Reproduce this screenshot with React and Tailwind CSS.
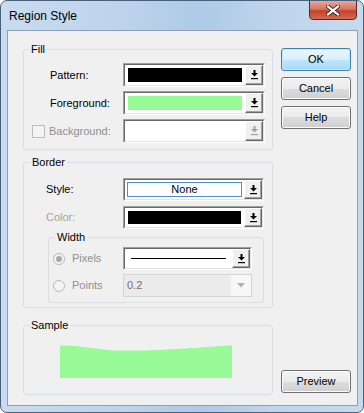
import React from "react";

const FONT = { fontFamily: '"Liberation Sans", Arial, sans-serif' };

function Arrow({ disabled }) {
  const c = disabled ? "#a3a3a3" : "#000";
  return (
    <svg width="9" height="10" viewBox="0 0 9 10">
      <rect x="3.5" y="0" width="2" height="3" fill={c} />
      <path d="M1 3h7L4.5 6.5z" fill={c} />
      <rect x="1" y="8" width="7" height="1.2" fill={c} />
    </svg>
  );
}

function Combo({ className, children, disabled }) {
  return (
    <div className={`flex border border-t-[#a0a0a0] border-l-[#a0a0a0] border-b-white border-r-white ${className}`}>
      <div className="flex flex-1 border border-t-[#696969] border-l-[#696969] border-b-[#e3e3e3] border-r-[#e3e3e3] bg-white">
        <div className="flex-1 flex items-stretch p-[3px]">{children}</div>
        <div className="w-[18px] flex items-center justify-center bg-[#f0f0f0] border border-t-white border-l-white border-b-[#696969] border-r-[#696969] shadow-[inset_-1px_-1px_0_#a0a0a0]">
          <Arrow disabled={disabled} />
        </div>
      </div>
    </div>
  );
}

function Group({ label, className, labelClass = "ml-[5px]", children }) {
  return (
    <div className={`border border-[#d5dfe5] rounded-[3px] ${className}`}>
      <span className={`block w-fit -mt-[8px] px-[2px] h-[14px] leading-[14px] bg-[#f0f0f0] ${labelClass}`}>{label}</span>
      {children}
    </div>
  );
}

function Btn({ children, primary, className = "" }) {
  return (
    <button
      className={`w-[70px] h-[23px] rounded-[3px] border text-[11px] text-black flex items-center justify-center ${
        primary
          ? "border-[#3c7fb1] bg-[linear-gradient(#eaf6fd_0%,#d9f0fc_50%,#bee6fd_50%,#a7d9f5_100%)] shadow-[inset_0_0_0_1px_#c4e8fc]"
          : "border-[#707070] bg-[linear-gradient(#f2f2f2_0%,#ebebeb_50%,#dddddd_50%,#cfcfcf_100%)] shadow-[inset_0_0_0_1px_#fcfcfc]"
      } ${className}`}
      style={FONT}
    >
      {children}
    </button>
  );
}

function Radio({ checked }) {
  return (
    <span className="w-[12px] h-[12px] rounded-full border border-[#b8b8b8] bg-[#f4f4f4] flex items-center justify-center">
      {checked && <span className="w-[6px] h-[6px] rounded-full bg-[#a8a8a8]" />}
    </span>
  );
}

export default function App() {
  return (
    <div
      className="w-[364px] h-[413px] overflow-hidden rounded-[7px] border border-[#4a5f78] bg-[linear-gradient(90deg,#c9dcef_0%,#bcd3eb_35%,#aecae6_55%,#bed5ec_75%,#c6daee_100%)] text-[11px] text-black"
      style={FONT}
    >
      {/* title bar */}
      <div className="h-[29px] flex items-start justify-between">
        <span className="pl-[8px] pt-[8px] text-[12px] leading-[14px]">Region Style</span>
        <div className="mr-[6px] -mt-px w-[48px] h-[20px] rounded-b-[4px] border border-[#5b2a22] bg-[linear-gradient(#e9a99b_0%,#d9735f_45%,#c5412c_55%,#d26a4e_100%)] flex items-center justify-center">
          <svg width="14" height="11" viewBox="0 0 14 11">
            <path d="M2 1.5l10 8M12 1.5l-10 8" stroke="#3b2a2a" strokeWidth="4" strokeLinecap="square" />
            <path d="M2 1.5l10 8M12 1.5l-10 8" stroke="#fff" strokeWidth="2.2" strokeLinecap="square" />
          </svg>
        </div>
      </div>

      {/* client area */}
      <div className="ml-[6px] mr-[5px] h-[376px] border border-[#8c9fb4] bg-[#f0f0f0] flex pl-[15px] pr-[5px]">
        <div className="w-[250px]">
          {/* Fill */}
          <Group label="Fill" className="mt-[18px] h-[101px]">
            <div className="mt-[7px] flex flex-col gap-[4px]">
              <div className="flex items-center h-[24px]">
                <div className="w-[99px] pl-[26px]">Pattern:</div>
                <Combo className="w-[142px] h-[24px]">
                  <div className="flex-1 bg-black" />
                </Combo>
              </div>
              <div className="flex items-center h-[24px]">
                <div className="w-[99px] pl-[26px]">Foreground:</div>
                <Combo className="w-[142px] h-[24px]">
                  <div className="flex-1 bg-[#98fb98]" />
                </Combo>
              </div>
              <div className="flex items-center h-[24px]">
                <div className="w-[99px] pl-[8px] flex items-center gap-[4px] text-[#8f8f8f]">
                  <span className="w-[13px] h-[13px] border border-[#bcbcbc] bg-[#f4f4f4]" />
                  <span>Background:</span>
                </div>
                <Combo className="w-[142px] h-[24px]" disabled />
              </div>
            </div>
          </Group>

          {/* Border */}
          <Group label="Border" labelClass="ml-[6px]" className="mt-[12px] h-[146px]">
            <div className="mt-[9px] flex flex-col gap-[5px]">
              <div className="flex items-center h-[23px]">
                <div className="w-[99px] pl-[22px]">Style:</div>
                <Combo className="w-[141px] h-[23px]">
                  <div className="flex-1 -m-px border border-[#4d8fd6] flex items-center justify-center">None</div>
                </Combo>
              </div>
              <div className="flex items-center h-[23px]">
                <div className="w-[99px] pl-[22px] text-[#a3a3a3]">Color:</div>
                <Combo className="w-[141px] h-[23px]">
                  <div className="flex-1 bg-black" />
                </Combo>
              </div>
            </div>

            <Group label="Width" labelClass="ml-[6px]" className="mt-[8px] ml-[24px] w-[216px] h-[66px]">
              <div className="mt-[3px] flex flex-col gap-[4px]">
                <div className="flex items-center h-[23px]">
                  <div className="w-[74px] pl-[4px] flex items-center gap-[7px] text-[#8f8f8f]">
                    <Radio checked />
                    <span>Pixels</span>
                  </div>
                  <Combo className="w-[129px] h-[23px]">
                    <div className="flex-1 flex items-center px-[3px]">
                      <div className="h-px w-full bg-black" />
                    </div>
                  </Combo>
                </div>
                <div className="flex items-center h-[23px]">
                  <div className="w-[74px] pl-[4px] flex items-center gap-[7px] text-[#8f8f8f]">
                    <Radio />
                    <span>Points</span>
                  </div>
                  <div className="w-[129px] h-[23px] flex border border-[#d4d4d4] bg-[#f7f7f7]">
                    <div className="w-[107px] bg-[#ebebeb] flex items-center pl-[3px] text-[#6d6d6d]">0.2</div>
                    <div className="flex-1 flex items-center justify-center">
                      <svg width="8" height="5" viewBox="0 0 8 5">
                        <path d="M0 0h8L4 4.5z" fill="#b0b0b0" />
                      </svg>
                    </div>
                  </div>
                </div>
              </div>
            </Group>
          </Group>

          {/* Sample */}
          <Group label="Sample" className="mt-[17px] h-[70px]">
            <svg className="mt-[13px] ml-[36px]" width="172" height="33" viewBox="0 0 172 33">
              <path
                d="M0 0.5L14 1L24 2L34 3.2L44 4.5L54 5.6L84 5.6L98 5L116 4L134 3L148 2L160 1L172 0.5L172 33L0 33Z"
                fill="#98fb98"
              />
            </svg>
          </Group>
        </div>

        {/* buttons */}
        <div className="ml-[8px] w-[70px] flex flex-col pt-[17px] pb-[12px] gap-[6px]">
          <Btn primary>OK</Btn>
          <Btn>Cancel</Btn>
          <Btn>Help</Btn>
          <Btn className="mt-auto">Preview</Btn>
        </div>
      </div>
    </div>
  );
}
